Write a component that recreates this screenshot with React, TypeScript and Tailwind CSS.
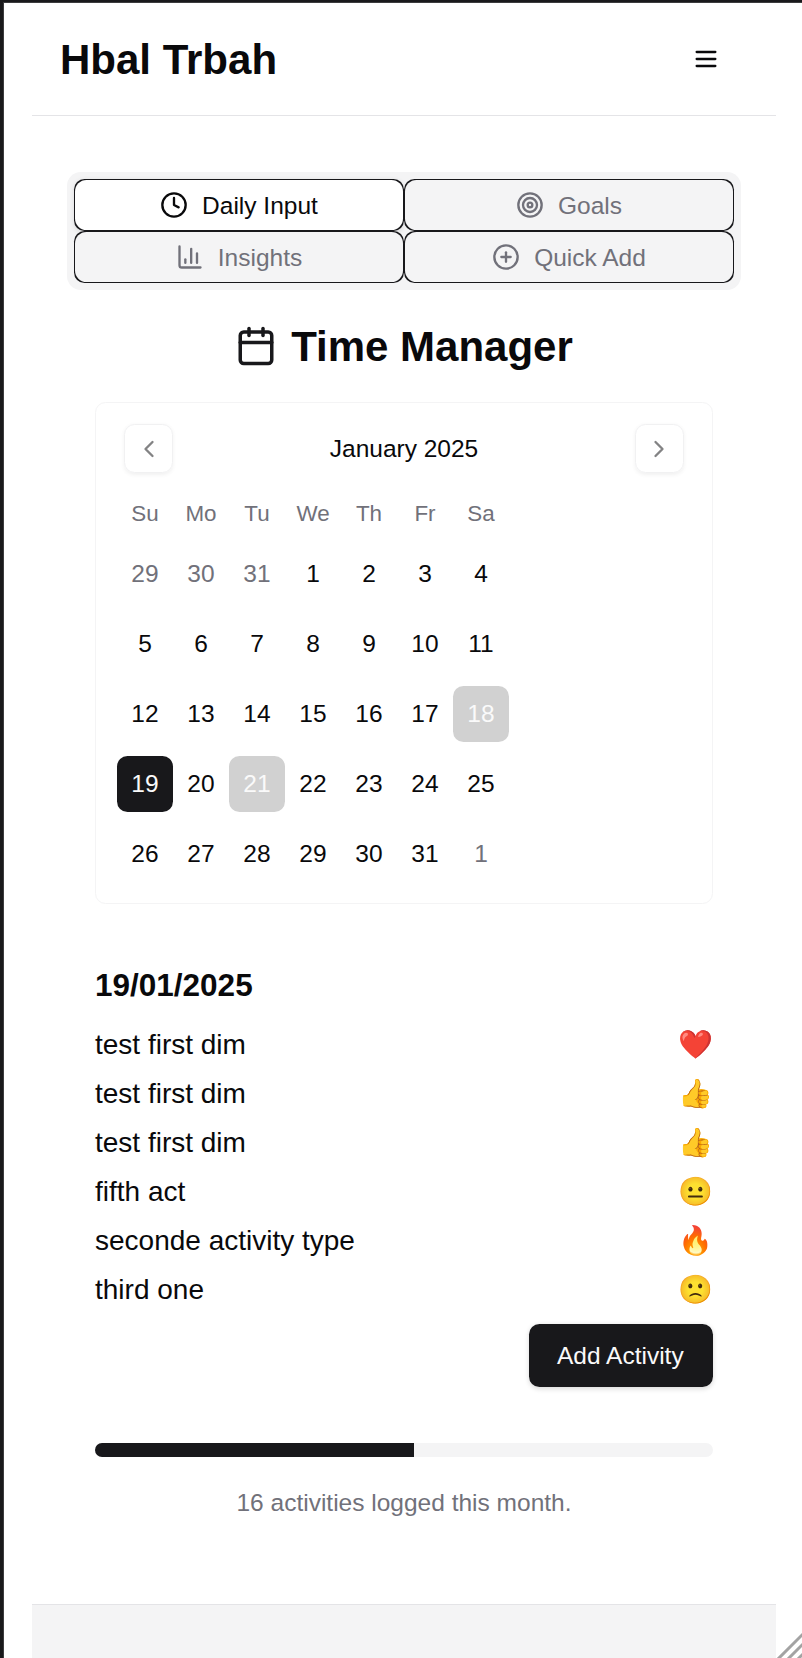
import React from "react";
import { Calendar, ChevronLeft, ChevronRight, CirclePlus, Clock, Target } from "lucide-react";

const weekdays = ["Su", "Mo", "Tu", "We", "Th", "Fr", "Sa"];

type DayKind = "normal" | "outside" | "selected" | "logged";
type Day = { n: number; kind: DayKind };

const days: Day[] = [
  ...[29, 30, 31].map((n): Day => ({ n, kind: "outside" })),
  ...Array.from({ length: 31 }, (_, i): Day => {
    const n = i + 1;
    return { n, kind: n === 19 ? "selected" : n === 18 || n === 21 ? "logged" : "normal" };
  }),
  { n: 1, kind: "outside" },
];

const dayStyles: Record<DayKind, string> = {
  normal: "",
  outside: "text-[#71717a]",
  selected: "bg-[#18181b] text-[#fafafa]",
  logged: "bg-[#d1d1d1] text-[#fafafa]",
};

const activities = [
  { name: "test first dim", mood: "❤️" },
  { name: "test first dim", mood: "👍" },
  { name: "test first dim", mood: "👍" },
  { name: "fifth act", mood: "😐" },
  { name: "seconde activity type", mood: "🔥" },
  { name: "third one", mood: "🙁" },
];

function InsightsIcon() {
  return (
    <svg width="28" height="28" viewBox="0 0 24 24" fill="none" stroke="currentColor" strokeWidth="2" strokeLinecap="round" strokeLinejoin="round">
      <path d="M3 3v16a2 2 0 0 0 2 2h16" />
      <path d="M18 17V9" />
      <path d="M13 17V5" />
      <path d="M8 17v-3" />
    </svg>
  );
}

function Tab({ icon, label, active = false }: { icon: React.ReactNode; label: string; active?: boolean }) {
  return (
    <button
      className={
        "flex h-[52px] rounded-[10.5px] bg-[#18181b] p-px text-[24.5px] leading-[35px] " +
        (active ? "text-[#09090b] shadow-[0_1.75px_5px_rgba(0,0,0,0.1)]" : "text-[#71717a]")
      }
    >
      <span
        className={
          "flex size-full items-center justify-center gap-[14px] rounded-[11.5px] " + (active ? "bg-white" : "bg-[#f4f4f5]")
        }
      >
        {icon}
        {label}
      </span>
    </button>
  );
}

function NavButton({ children }: { children: React.ReactNode }) {
  return (
    <button className="flex size-[49px] items-center justify-center rounded-[10.5px] border border-[#e4e4e7] text-[#09090b] opacity-50 shadow-[0_1.75px_3.5px_rgba(0,0,0,0.1)]">
      {children}
    </button>
  );
}

export default function App() {
  return (
    <div className="relative flex h-[1658px] w-[802px] flex-col overflow-hidden border-t-2 border-l-3 border-[#19191b] bg-white font-['Liberation_Sans',Arial,sans-serif] text-[#09090b]">
      <div className="flex min-h-0 flex-1 flex-col border-t border-l border-[#3c3c3e] pr-[26px] pl-[28px]">
        <header className="flex h-[113px] shrink-0 items-center justify-between border-b border-[#e4e4e7] pr-[56px] pl-[28px]">
          <h1 className="pt-[2px] text-[42px] leading-[56px] font-bold">Hbal Trbah</h1>
          <svg width="28" height="28" viewBox="0 0 24 24" fill="none" stroke="currentColor" strokeWidth="2" strokeLinecap="round">
            <path d="M4 12h16M4 6h16M4 18h16" />
          </svg>
        </header>

        <main className="flex flex-1 flex-col px-[35px] pt-[56px]">
          <nav className="grid h-[118px] grid-cols-2 rounded-[14px] bg-[#f4f4f5] p-[7px]">
            <Tab active icon={<Clock size={28} />} label="Daily Input" />
            <Tab icon={<Target size={28} />} label="Goals" />
            <Tab icon={<InsightsIcon />} label="Insights" />
            <Tab icon={<CirclePlus size={28} />} label="Quick Add" />
          </nav>

          <div className="flex flex-col px-[28px] pt-[28px]">
            <h2 className="flex h-[56px] items-center justify-center gap-[14px] text-[42px] leading-[56px] font-bold">
              <Calendar size={42} className="text-[#18181b]" />
              <span className="pt-[2px]">Time Manager</span>
            </h2>

            <section className="mt-[28px] h-[502px] rounded-[10.5px] border border-[#f4f4f5] p-[21px]">
              <div className="flex h-[49px] items-center justify-between px-[7px]">
                <NavButton>
                  <ChevronLeft size={28} />
                </NavButton>
                <span className="text-[24.5px] leading-[35px]">January 2025</span>
                <NavButton>
                  <ChevronRight size={28} />
                </NavButton>
              </div>
              <div className="mt-[24px] grid w-[392px] grid-cols-7 text-center text-[22.4px] leading-[34px] text-[#71717a]">
                {weekdays.map((d) => (
                  <span key={d}>{d}</span>
                ))}
              </div>
              <div className="mt-[15px] grid w-[392px] grid-cols-7 gap-y-[14px] text-[24.5px] leading-[35px]">
                {days.map((d, i) => (
                  <button key={i} className={"flex size-[56px] items-center justify-center rounded-[10.5px] pb-[2px] " + dayStyles[d.kind]}>
                    {d.n}
                  </button>
                ))}
              </div>
            </section>

            <h3 className="mt-[57px] text-[31.5px] leading-[49px] font-bold">19/01/2025</h3>
            <ul className="mt-[10px]">
              {activities.map((a, i) => (
                <li key={i} className="flex h-[49px] items-center justify-between text-[28px] leading-[42px]">
                  <span>{a.name}</span>
                  <span>{a.mood}</span>
                </li>
              ))}
            </ul>
            <button className="mt-[10px] flex h-[63px] w-[184px] items-center self-end rounded-[10.5px] bg-[#18181b] pl-[28px] text-[24.5px] leading-[35px] whitespace-nowrap text-[#fafafa] shadow-[0_1.75px_5px_rgba(0,0,0,0.15)]">
              Add Activity
            </button>
            <div className="mt-[56px] h-[14px] overflow-hidden rounded-full bg-[#f4f4f5]">
              <div className="h-full w-[319px] bg-[#18181b]" />
            </div>
            <p className="mt-[28px] text-center text-[24.5px] leading-[35px] text-[#71717a]">16 activities logged this month.</p>
          </div>
        </main>
        <footer className="h-[54px] shrink-0 border-t border-[#e4e4e7] bg-[#f4f4f5]" />
      </div>
      <svg className="absolute right-0 bottom-0" width="26" height="26" viewBox="0 0 26 26" stroke="#a3a3a3" strokeWidth="3">
        <path d="M1 28 29 0M10 29 29 10M20 29 29 20" />
      </svg>
    </div>
  );
}
